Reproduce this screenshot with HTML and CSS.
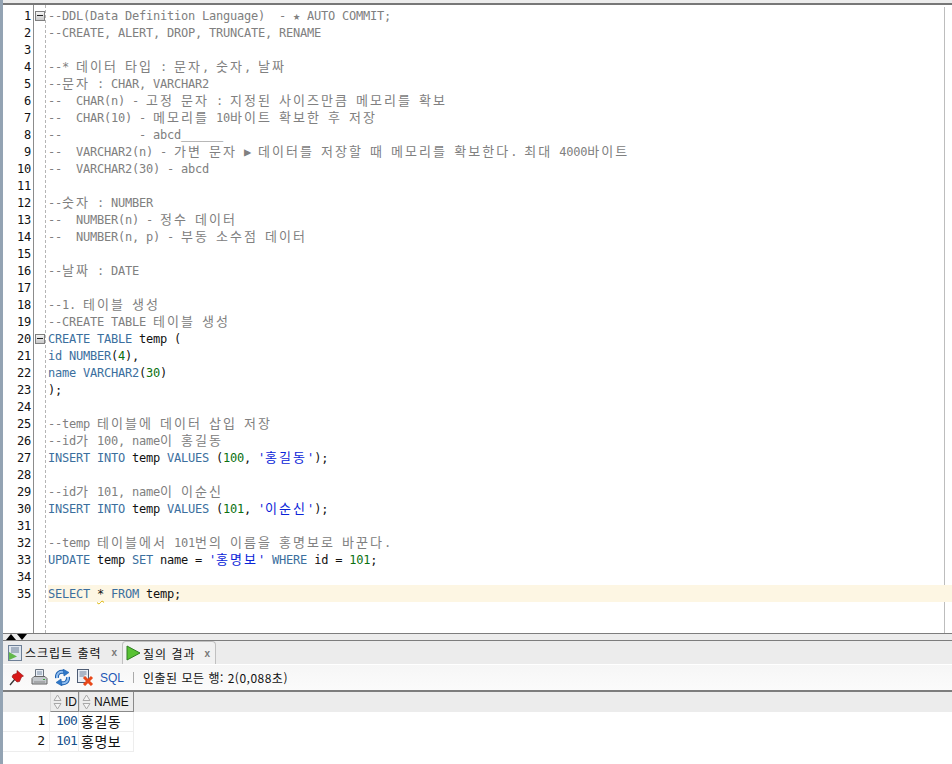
FILE: index.html
```html
<!DOCTYPE html>
<html lang="ko">
<head>
<meta charset="utf-8">
<title>SQL Worksheet</title>
<link rel="stylesheet" href="styles.css">
</head>
<body>
<div class="app">
  <div class="topbar"></div>
  <main class="editor">
    <div class="ln"><span class="num">1</span><span class="fold"><span class="foldbox"></span></span><span class="code c">--DDL(Data Definition Language)  - <span class="star">★</span> AUTO COMMIT;</span></div>
    <div class="ln"><span class="num">2</span><span class="fold"></span><span class="code c">--CREATE, ALERT, DROP, TRUNCATE, RENAME</span></div>
    <div class="ln"><span class="num">3</span><span class="fold"></span><span class="code c"></span></div>
    <div class="ln"><span class="num">4</span><span class="fold"></span><span class="code c">--* <span class="k">데이터</span> <span class="k">타입</span> : <span class="k">문자</span>, <span class="k">숫자</span>, <span class="k">날짜</span></span></div>
    <div class="ln"><span class="num">5</span><span class="fold"></span><span class="code c">--<span class="k">문자</span> : CHAR, VARCHAR2</span></div>
    <div class="ln"><span class="num">6</span><span class="fold"></span><span class="code c">--  CHAR(n) - <span class="k">고정</span> <span class="k">문자</span> : <span class="k">지정된</span> <span class="k">사이즈만큼</span> <span class="k">메모리를</span> <span class="k">확보</span></span></div>
    <div class="ln"><span class="num">7</span><span class="fold"></span><span class="code c">--  CHAR(10) - <span class="k">메모리를</span> 10<span class="k">바이트</span> <span class="k">확보한</span> <span class="k">후</span> <span class="k">저장</span></span></div>
    <div class="ln"><span class="num">8</span><span class="fold"></span><span class="code c">--           - abcd______</span></div>
    <div class="ln"><span class="num">9</span><span class="fold"></span><span class="code c">--  VARCHAR2(n) - <span class="k">가변</span> <span class="k">문자</span> <span class="tri">▶</span> <span class="k">데이터를</span> <span class="k">저장할</span> <span class="k">때</span> <span class="k">메모리를</span> <span class="k">확보한다</span>. <span class="k">최대</span> 4000<span class="k">바이트</span></span></div>
    <div class="ln"><span class="num">10</span><span class="fold"></span><span class="code c">--  VARCHAR2(30) - abcd</span></div>
    <div class="ln"><span class="num">11</span><span class="fold"></span><span class="code c"></span></div>
    <div class="ln"><span class="num">12</span><span class="fold"></span><span class="code c">--<span class="k">숫자</span> : NUMBER</span></div>
    <div class="ln"><span class="num">13</span><span class="fold"></span><span class="code c">--  NUMBER(n) - <span class="k">정수</span> <span class="k">데이터</span></span></div>
    <div class="ln"><span class="num">14</span><span class="fold"></span><span class="code c">--  NUMBER(n, p) - <span class="k">부동</span> <span class="k">소수점</span> <span class="k">데이터</span></span></div>
    <div class="ln"><span class="num">15</span><span class="fold"></span><span class="code c"></span></div>
    <div class="ln"><span class="num">16</span><span class="fold"></span><span class="code c">--<span class="k">날짜</span> : DATE</span></div>
    <div class="ln"><span class="num">17</span><span class="fold"></span><span class="code c"></span></div>
    <div class="ln"><span class="num">18</span><span class="fold"></span><span class="code c">--1. <span class="k">테이블</span> <span class="k">생성</span></span></div>
    <div class="ln"><span class="num">19</span><span class="fold"></span><span class="code c">--CREATE TABLE <span class="k">테이블</span> <span class="k">생성</span></span></div>
    <div class="ln"><span class="num">20</span><span class="fold"><span class="foldbox"></span></span><span class="code"><span class="kw">CREATE TABLE</span> temp (</span></div>
    <div class="ln"><span class="num">21</span><span class="fold"></span><span class="code"><span class="kw">id NUMBER</span>(<span class="n">4</span>),</span></div>
    <div class="ln"><span class="num">22</span><span class="fold"></span><span class="code"><span class="kw">name VARCHAR2</span>(<span class="n">30</span>)</span></div>
    <div class="ln"><span class="num">23</span><span class="fold"></span><span class="code">);</span></div>
    <div class="ln"><span class="num">24</span><span class="fold"></span><span class="code"></span></div>
    <div class="ln"><span class="num">25</span><span class="fold"></span><span class="code c">--temp <span class="k">테이블에</span> <span class="k">데이터</span> <span class="k">삽입</span> <span class="k">저장</span></span></div>
    <div class="ln"><span class="num">26</span><span class="fold"></span><span class="code c">--id<span class="k">가</span> 100, name<span class="k">이</span> <span class="k">홍길동</span></span></div>
    <div class="ln"><span class="num">27</span><span class="fold"></span><span class="code"><span class="kw">INSERT INTO</span> temp <span class="kw">VALUES</span> (<span class="n">100</span>, <span class="s">'<span class="k">홍길동</span>'</span>);</span></div>
    <div class="ln"><span class="num">28</span><span class="fold"></span><span class="code"></span></div>
    <div class="ln"><span class="num">29</span><span class="fold"></span><span class="code c">--id<span class="k">가</span> 101, name<span class="k">이</span> <span class="k">이순신</span></span></div>
    <div class="ln"><span class="num">30</span><span class="fold"></span><span class="code"><span class="kw">INSERT INTO</span> temp <span class="kw">VALUES</span> (<span class="n">101</span>, <span class="s">'<span class="k">이순신</span>'</span>);</span></div>
    <div class="ln"><span class="num">31</span><span class="fold"></span><span class="code"></span></div>
    <div class="ln"><span class="num">32</span><span class="fold"></span><span class="code c">--temp <span class="k">테이블에서</span> 101<span class="k">번의</span> <span class="k">이름을</span> <span class="k">홍명보로</span> <span class="k">바꾼다</span>.</span></div>
    <div class="ln"><span class="num">33</span><span class="fold"></span><span class="code"><span class="kw">UPDATE</span> temp <span class="kw">SET</span> name = <span class="s">'<span class="k">홍명보</span>'</span> <span class="kw">WHERE</span> id = <span class="n">101</span>;</span></div>
    <div class="ln"><span class="num">34</span><span class="fold"></span><span class="code"></span></div>
    <div class="ln current"><span class="num">35</span><span class="fold"></span><span class="code"><span class="kw">SELECT</span> <span class="warn">*</span> <span class="kw">FROM</span> temp;</span></div>
  </main>
  <div class="splitter">
    <svg class="arrows" width="26" height="6" viewBox="0 0 26 6"><path d="M1 6 L6 0 L11 6Z"/><path d="M12 0 L22 0 L17 6Z"/></svg>
  </div>
  <div class="tabs">
    <div class="tab">
      <svg class="icon" width="14" height="16" viewBox="0 0 14 16"><rect x="0.5" y="0.5" width="13" height="15" fill="#dfe6ee" stroke="#6d7f96"/><path d="M3 3h8M3 5h8M3 7h8" stroke="#6d7f96"/><path d="M1 7 L9 11.5 L1 15Z" fill="#62b84c"/></svg>
      <span class="tabtext">스크립트 출력</span><span class="close">x</span>
    </div>
    <div class="tab active">
      <svg class="icon" width="15" height="16" viewBox="0 0 15 16"><path d="M1 1 L14 8 L1 15Z" fill="#58c233" stroke="#2f7d22"/></svg>
      <span class="tabtext">질의 결과</span><span class="close">x</span>
    </div>
  </div>
  <div class="toolbar">
    <svg class="tool pin" width="15" height="16" viewBox="0 0 15 16"><path d="M1 15 L6 9" stroke="#333" stroke-width="1.3"/><path d="M8 .5 L14.5 6 L12.5 7 L10.5 11.5 L8 12 L3 7 L4 4.8 L8 3.2Z" fill="#d81818" stroke="#8c0f0f" stroke-width=".6"/></svg>
    <svg class="tool print" width="17" height="17" viewBox="0 0 17 17"><path d="M4.5 .5h8v8h-8Z" fill="#e9eef5" stroke="#6a7480"/><path d="M6 3h5M6 5h5" stroke="#7d8fa6"/><path d="M1 9.5 L3 7.5h11l2 2v5.5H1Z" fill="#c4c8cc" stroke="#666"/><path d="M3 13h11" stroke="#888"/><rect x="12" y="10" width="2" height="1" fill="#3ba53b"/></svg>
    <svg class="tool refresh" width="17" height="17" viewBox="0 0 17 17"><g fill="none" stroke="#1b5fae" stroke-width="4"><path d="M3 9 C2.5 4 6 2 10 3"/><path d="M14 8 C14.5 13 11 15 7 14"/></g><g fill="none" stroke="#8fbdf0" stroke-width="2"><path d="M3 9 C2.5 4 6 2 10 3"/><path d="M14 8 C14.5 13 11 15 7 14"/></g><path d="M9 0 L15 3.5 L10 7Z M8 17 L2 13.5 L7 10Z" fill="#2f78c8" stroke="#1b5fae" stroke-width=".6"/></svg>
    <svg class="tool clear" width="17" height="17" viewBox="0 0 17 17"><rect x=".5" y=".5" width="11" height="13" fill="#e9eef5" stroke="#4e5c74"/><path d="M2.5 3h7M2.5 5h7M2.5 7h5" stroke="#6b7d98"/><path d="M7 8 L15 16 M15 8 L7 16" stroke="#e8481a" stroke-width="3"/></svg>
    <span class="sql">SQL</span>
    <span class="sep"></span>
    <span class="status">인출된 모든 행: 2(0,088초)</span>
  </div>
  <div class="grid">
    <div class="corner"></div>
    <div class="head hid"><svg class="sort" width="9" height="16" viewBox="0 0 9 16"><path d="M4.5 1 L8 6.5 H1Z M4.5 15 L8 9.5 H1Z" fill="#f4f4f4" stroke="#a8a8a8"/></svg><span>ID</span></div>
    <div class="head hname"><svg class="sort" width="9" height="16" viewBox="0 0 9 16"><path d="M4.5 1 L8 6.5 H1Z M4.5 15 L8 9.5 H1Z" fill="#f4f4f4" stroke="#a8a8a8"/></svg><span>NAME</span></div>
    <div class="cell rownum">1</div><div class="cell idval">100</div><div class="cell name">홍길동</div>
    <div class="cell rownum">2</div><div class="cell idval">101</div><div class="cell name">홍명보</div>
  </div>
</div>
</body>
</html>
```
FILE: styles.css
```css
* { box-sizing: border-box; }
html, body { margin: 0; padding: 0; background: #fff; }
.app {
  width: 952px; height: 764px; display: flex; flex-direction: column;
  overflow: hidden; background: #fff;
  border-left: 3px solid #93a3b3;
  font-family: "Noto Sans CJK KR", "Liberation Sans", sans-serif;
}
.topbar { height: 5px; flex: none; margin-left: -3px; background: #ececec; border-bottom: 2px solid #777; }
.editor {
  height: 629px; flex: none; padding-top: 2px;
  font: 12px/19px "DejaVu Sans Mono", monospace;
  background-image:
    linear-gradient(#bdbdbd, #bdbdbd),
    linear-gradient(#8c8c8c, #8c8c8c),
    repeating-linear-gradient(#b5b5b5 0 3px, transparent 3px 5px);
  background-size: 1px 100%, 1px 100%, 1px 100%;
  background-position: 941px 2px, 30px 0, 42px 0;
  background-repeat: no-repeat;
}
.ln { display: flex; height: 17px; }
.num { width: 28px; flex: none; text-align: right; letter-spacing: -.224px; color: #111; }
.fold { width: 17px; flex: none; display: flex; align-items: center; padding-left: 4px; }
.foldbox {
  width: 10px; height: 10px; border: 1px solid #7f7f7f; background: linear-gradient(#f4f4f4, #c9c9c9);
  display: flex; align-items: center; justify-content: center;
}
.foldbox::after { content: ""; width: 6px; height: 1px; background: #222; }
.code { flex: 1; white-space: pre; letter-spacing: -.224px; color: #111; }
.c { color: #808080; }
.kw { color: #3b6f9e; }
.s { color: #0a24d8; }
.n { color: #0a7010; }
.k { font: 13px/0 "Noto Sans CJK KR", sans-serif; letter-spacing: 2.04px; }
.star { display: inline-block; width: 7px; line-height: 0; letter-spacing: 0; }
.tri { display: inline-block; width: 7px; line-height: 0; letter-spacing: 0; }
.current .code { background: #fdf6e3; }
.warn { text-decoration: underline wavy #dcb400 1px; text-underline-offset: 2px; }
.splitter { height: 7px; flex: none; margin-top: -1px; border-top: 1px solid #7d7d7d; background: #ececec; display: flex; align-items: flex-end; }
.arrows { display: block; margin-left: 2px; fill: #000; }
.tabs { height: 24px; flex: none; background: #ececec; border-top: 1px solid #7d7d7d; display: flex; padding-left: 2px; align-items: flex-end; gap: 1px; }
.tab { height: 23px; display: flex; align-items: center; font-size: 12px; color: #111; white-space: nowrap; }
.tab:first-child { width: 116px; padding-left: 3px; }
.tab.active { width: 94px; padding-left: 3px; background: #f1f1f1; border: 1px solid #c0c0c0; border-bottom: 0; border-radius: 4px 4px 0 0; }
.tabtext { letter-spacing: 1px; margin-left: 3px; }
.tab.active .tabtext { margin-left: 2px; }
.close { margin-left: 10px; font: bold 10px "Liberation Sans", sans-serif; color: #777; }
.tab.active .close { margin-left: 9px; }
.icon { display: block; flex: none; }
.toolbar { height: 26px; flex: none; display: flex; align-items: center; background: linear-gradient(#f6f6f6, #fbfbfb); border-top: 1px solid #fff; padding-left: 6px; }
.tool { display: block; flex: none; }
.pin { margin-right: 7px; }
.print { margin-right: 6px; }
.refresh { margin-right: 6px; }
.clear { margin-right: 6px; }
.sql { font: 12px "Liberation Sans", sans-serif; color: #2257b5; width: 26px; }
.sep { width: 1px; height: 11px; background: #aaa; margin: 0 9px 0 7px; }
.status { font-size: 12px; letter-spacing: .5px; color: #111; white-space: nowrap; }
.grid {
  flex: none; border-top: 2px solid #7d7d7d; display: grid;
  grid-template-columns: 47px 29px 55px; grid-template-rows: 20px 20px 20px;
  grid-auto-rows: 20px;
  background: linear-gradient(#ececec 20px, #fff 20px);
}
.corner { background: #ececec; }
.head {
  display: flex; align-items: center; gap: 3px; padding-left: 2px;
  font: 12px "Liberation Sans", sans-serif; color: #111;
  background: #ececec; border-right: 1px solid #8a8a8a; border-bottom: 1px solid #8a8a8a; border-left: 1px solid #d8d8d8;
}
.sort { display: block; flex: none; }
.cell { display: flex; align-items: center; font-size: 14px; color: #111; border-right: 1px solid #ededed; border-bottom: 1px solid #ededed; background: #fff; padding-bottom: 2px; }
.rownum { justify-content: flex-end; padding-right: 4px; font: 13px "DejaVu Sans Mono", monospace; background: #fff; }
.idval { justify-content: flex-end; padding-right: 1px; font: 13px "DejaVu Sans Mono", monospace; letter-spacing: -.8px; color: #17508c; }
.name { padding-left: 2px; letter-spacing: .5px; }
```
